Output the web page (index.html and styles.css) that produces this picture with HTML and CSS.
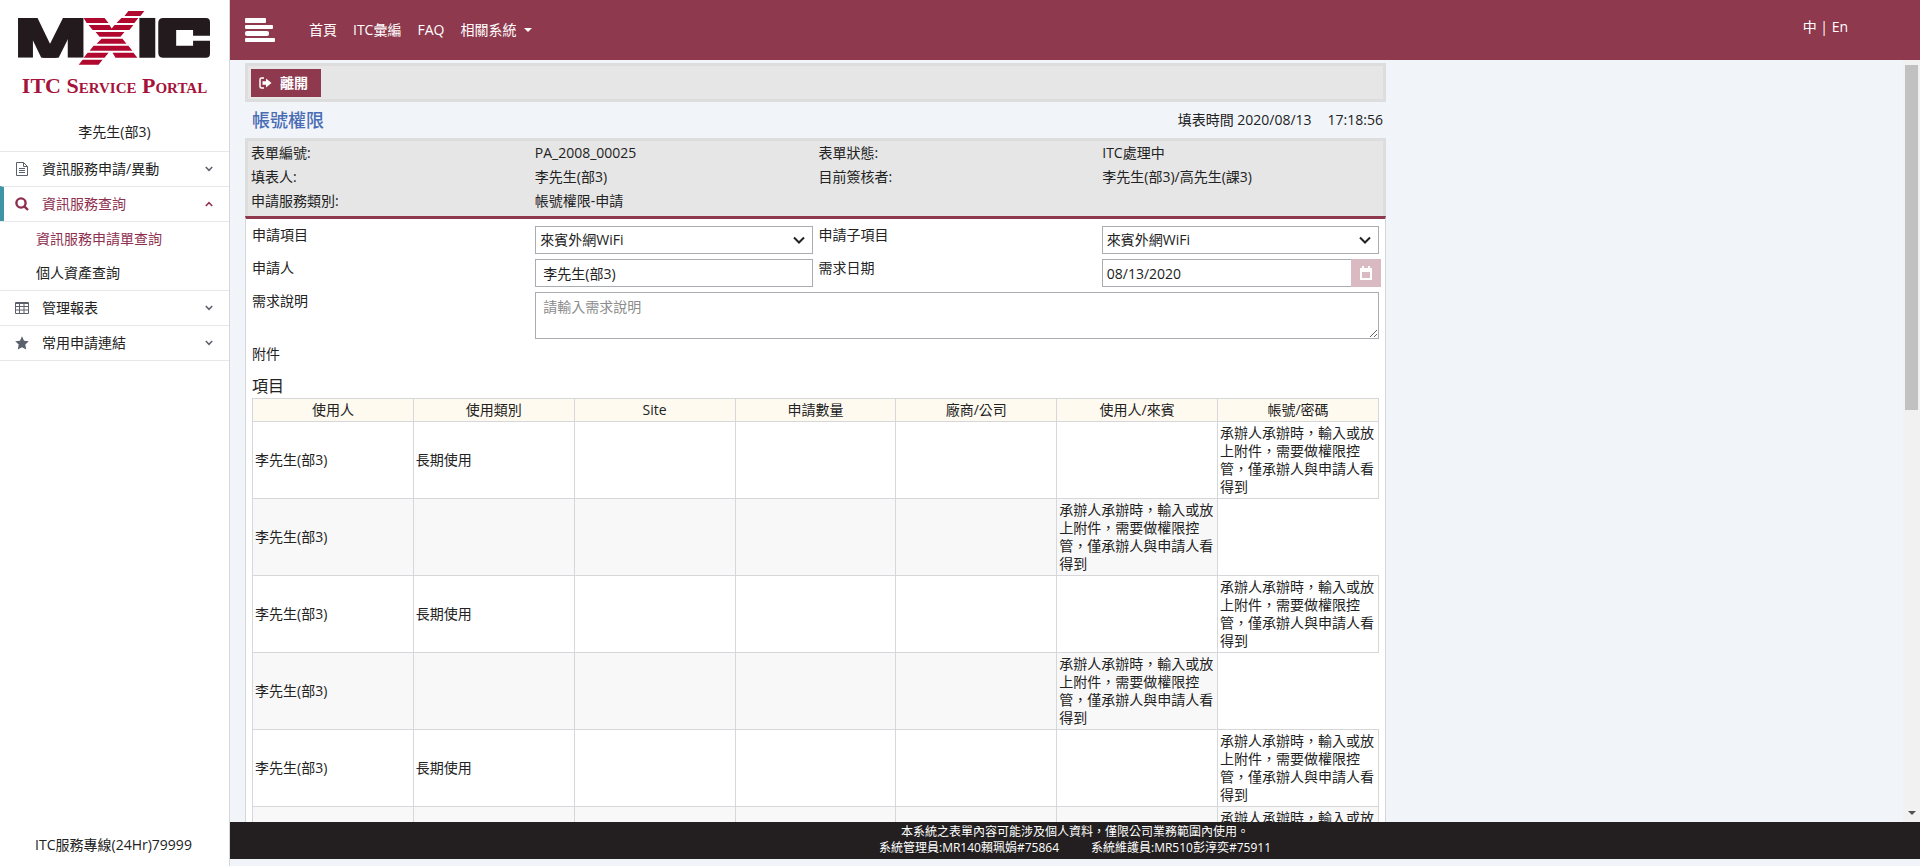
FILE: index.html
```
<!DOCTYPE html>
<html lang="zh-Hant">
<head>
<meta charset="utf-8">
<title>ITC Service Portal</title>
<link rel="stylesheet" href="styles.css">
</head>
<body>
<div class="app">
  <aside class="sidebar">
    <div class="brand">
      <svg class="brand-logo" viewBox="0 0 194 56" role="img" aria-label="MXIC">
        <svg x="0" y="8" width="66" height="40" viewBox="0 0 66 40">
          <rect width="15" height="40" fill="#231a1e"/>
          <rect x="50" width="16" height="40" fill="#231a1e"/>
          <line x1="8" y1="-8" x2="35" y2="48" stroke="#231a1e" stroke-width="14"/>
          <line x1="57" y1="-8" x2="29" y2="48" stroke="#231a1e" stroke-width="14"/>
        </svg>
        <path fill="#b0082f" d="M111 1h16l-4 5h-16zM66 8h21l4 5H69zM104 8h17l-4 5H99zM71 15h21l3 5H75zM97 15h19l-4 5H93zM78 22h29l-4 5H82zM84 29h21l4 5H79zM76 36h35l4 5H72zM70 43h21l-4 5H66zM95 43h21l4 5H98zM65 50h20l-4 5H61z"/>
        <rect x="122" y="8" width="16" height="40" fill="#231a1e"/>
        <path fill="#231a1e" d="M146 8H189q4 0 4 4V26H176V20H159V36H176V31H193V44q0 4-4 4H146q-5 0-5-5V13q0-5 5-5z"/>
      </svg>
      <div class="brand-name">ITC Service Portal</div>
    </div>
    <div class="user">李先生(部3)</div>
    <nav class="menu">
      <button class="menu-item" type="button">
        <svg class="menu-icon" viewBox="0 0 14 14" fill="none" stroke="currentColor"><path d="M1.5.5h7l4 4v9h-11zM8.5.5v4h4M4 6.5h6M4 8.500h6M4 10.500h6"/></svg>
        <span>資訊服務申請/異動</span>
        <svg class="chev" viewBox="0 0 8 6"><path d="M.8 1 4 4.300 7.200 1"/></svg>
      </button>
      <button class="menu-item active" type="button">
        <svg class="menu-icon" viewBox="0 0 14 14" fill="none" stroke="currentColor" stroke-width="2.400"><circle cx="6" cy="6" r="4.600"/><path d="m9.300 9.300 3.700 3.700"/></svg>
        <span>資訊服務查詢</span>
        <svg class="chev" viewBox="0 0 8 6"><path d="M.8 5 4 1.700 7.200 5"/></svg>
      </button>
      <div class="submenu">
        <a class="current" href="#">資訊服務申請單查詢</a>
        <a href="#">個人資產查詢</a>
      </div>
      <button class="menu-item" type="button">
        <svg class="menu-icon" viewBox="0 0 14 14" fill="none" stroke="currentColor"><path d="M.5 1.500h13v11H.5zM1 2.500h12M.5 5.500h13M.5 9h13M4.500 2v10.500M9 2v10.500"/></svg>
        <span>管理報表</span>
        <svg class="chev" viewBox="0 0 8 6"><path d="M.8 1 4 4.300 7.200 1"/></svg>
      </button>
      <button class="menu-item" type="button">
        <svg class="menu-icon" viewBox="0 0 14 14" fill="currentColor"><path d="m7 .3 2 4.400 4.800.6-3.500 3.300.9 4.900L7 11.200l-4.200 2.300.9-4.900L.2 5.300 5 4.700z"/></svg>
        <span>常用申請連結</span>
        <svg class="chev" viewBox="0 0 8 6"><path d="M.8 1 4 4.300 7.200 1"/></svg>
      </button>
    </nav>
    <div class="hotline">ITC服務專線(24Hr)79999</div>
  </aside>

  <div class="page">
    <header class="topbar">
      <button class="burger" type="button" aria-label="選單">
        <svg viewBox="0 0 30 24" fill="#fff"><rect width="21" height="5" rx="1"/><rect y="7" width="28" height="4" rx="1"/><rect y="13" width="24" height="5" rx="2"/><rect y="20" width="30" height="4" rx="1"/></svg>
      </button>
      <nav class="topnav">
        <a href="#">首頁</a>
        <a href="#">ITC彙編</a>
        <a href="#">FAQ</a>
        <a href="#">相關系統<svg class="caret" viewBox="0 0 8 4"><path fill="#fff" d="M0 0h8L4 4z"/></svg></a>
      </nav>
      <div class="lang"><a href="#">中</a> | <a href="#">En</a></div>
    </header>

    <div class="body">
      <main class="content">
        <div class="toolbar">
          <button class="leave" type="button">
            <svg viewBox="0 0 13 12"><path fill="none" stroke="#fff" stroke-width="1.500" d="M5 1H2.500Q1 1 1 2.500v7Q1 11 2.500 11H5"/><path fill="#fff" d="M3.500 4.200H7V1.500L12.500 6 7 10.500V7.800H3.500z"/></svg>
            離開
          </button>
        </div>
        <div class="heading">
          <h1>帳號權限</h1>
          <div class="time"><span>填表時間 2020/08/13</span><span>17:18:56</span></div>
        </div>
        <div class="summary">
          <span>表單編號:</span><span>PA_2008_00025</span><span>表單狀態:</span><span>ITC處理中</span>
          <span>填表人:</span><span>李先生(部3)</span><span>目前簽核者:</span><span>李先生(部3)/高先生(課3)</span>
          <span>申請服務類別:</span><span>帳號權限-申請</span>
        </div>
        <section class="panel">
          <form class="form">
            <label for="item">申請項目</label>
            <div class="select"><select id="item"><option>來賓外網WiFi</option></select><svg viewBox="0 0 12 8"><path d="m1 1.500 5 5 5-5"/></svg></div>
            <label for="subitem">申請子項目</label>
            <div class="select"><select id="subitem"><option>來賓外網WiFi</option></select><svg viewBox="0 0 12 8"><path d="m1 1.500 5 5 5-5"/></svg></div>
            <label for="applicant">申請人</label>
            <input id="applicant" class="field" type="text" value="李先生(部3)">
            <label for="due">需求日期</label>
            <div class="date">
              <input id="due" class="field" type="text" value="08/13/2020">
              <button type="button" aria-label="選擇日期"><svg viewBox="0 0 12 14"><path fill="#fff" fill-rule="evenodd" d="M0 2h2V0h2v2h4V0h2v2h2v12H0zM2 6v6h8V6z"/></svg></button>
            </div>
            <label for="desc">需求說明</label>
            <textarea id="desc" class="field" placeholder="請輸入需求說明"></textarea>
            <span class="attach">附件</span>
          </form>
          <h2>項目</h2>
          <table>
            <thead><tr><th>使用人</th><th>使用類別</th><th>Site</th><th>申請數量</th><th>廠商/公司</th><th>使用人/來賓</th><th>帳號/密碼</th></tr></thead>
            <tbody>
              <tr><td>李先生(部3)</td><td>長期使用</td><td></td><td></td><td></td><td></td><td>承辦人承辦時，輸入或放上附件，需要做權限控管，僅承辦人與申請人看得到</td></tr>
              <tr><td>李先生(部3)</td><td></td><td></td><td></td><td></td><td>承辦人承辦時，輸入或放上附件，需要做權限控管，僅承辦人與申請人看得到</td></tr>
              <tr><td>李先生(部3)</td><td>長期使用</td><td></td><td></td><td></td><td></td><td>承辦人承辦時，輸入或放上附件，需要做權限控管，僅承辦人與申請人看得到</td></tr>
              <tr><td>李先生(部3)</td><td></td><td></td><td></td><td></td><td>承辦人承辦時，輸入或放上附件，需要做權限控管，僅承辦人與申請人看得到</td></tr>
              <tr><td>李先生(部3)</td><td>長期使用</td><td></td><td></td><td></td><td></td><td>承辦人承辦時，輸入或放上附件，需要做權限控管，僅承辦人與申請人看得到</td></tr>
              <tr><td></td><td></td><td></td><td></td><td></td><td></td><td>承辦人承辦時，輸入或放上附件，需要做權限控管，僅承辦人與申請人看得到</td></tr>
            </tbody>
          </table>
        </section>
      </main>
      <div class="scrollbar"><div class="thumb"></div><svg viewBox="0 0 8 4"><path fill="#505050" d="M0 0h8L4 4z"/></svg></div>
    </div>

    <footer class="footer">
      <div>本系統之表單內容可能涉及個人資料，僅限公司業務範圍內使用。</div>
      <div class="contacts"><span>系統管理員:MR140賴珮娟#75864</span><span>系統維護員:MR510彭淳奕#75911</span></div>
    </footer>
  </div>
</div>
</body>
</html>
```
FILE: styles.css
```
* { box-sizing: border-box; }
body {
  margin: 0;
  font: 14px/18px "Open Sans", "Noto Sans CJK TC", sans-serif;
  color: #222;
  background: #f1f5fa;
}
button, input, select, textarea { font: inherit; color: inherit; margin: 0; }
button { border: 0; background: none; padding: 0; }
a { color: inherit; text-decoration: none; }

.app { display: flex; height: 100vh; }

.sidebar {
  width: 230px;
  flex: none;
  display: flex;
  flex-direction: column;
  background: #fff;
  border-right: 1px solid #d5d7da;
}
.brand { padding: 10px 18px 0; }
.brand-logo { display: block; width: 100%; }
.brand-name {
  margin-top: 8px;
  font: bold 22px/24px "Liberation Serif", serif;
  font-variant: small-caps;
  text-align: center;
  white-space: nowrap;
  color: #a5123a;
}
.user { padding: 25px 0 10px; text-align: center; }
.menu-item {
  display: flex;
  align-items: center;
  width: 100%;
  height: 35px;
  padding: 0 16px 0 15px;
  border-top: 1px solid #e6e7e9;
  text-align: left;
}
.menu-item span { flex: 1; }
.menu-item:last-child { height: 36px; border-bottom: 1px solid #e6e7e9; }
.menu-icon { width: 14px; height: 14px; margin-right: 13px; color: #5a606c; }
.chev { width: 8px; height: 6px; fill: none; stroke: #5a606c; stroke-width: 1.5; }
.menu-item.active {
  padding-left: 11px;
  border-left: 4px solid #3f95a5;
  color: #8e2f50;
}
.menu-item.active .menu-icon { color: #8e2f50; }
.menu-item.active .chev { stroke: #8e2f50; }
.submenu { border-top: 1px solid #e6e7e9; }
.submenu a { display: block; padding: 8px 0 8px 36px; }
.submenu .current { color: #8e2f50; }
.hotline { margin-top: auto; padding: 0 2px 12px 0; text-align: center; }

.page { flex: 1; min-width: 0; display: flex; flex-direction: column; }
.topbar {
  flex: none;
  display: flex;
  align-items: center;
  height: 60px;
  padding: 0 72px 0 15px;
  background: #8e394d;
  color: #fff;
}
.burger { width: 30px; height: 24px; }
.burger svg { display: block; }
.topnav { display: flex; gap: 16px; margin-left: 34px; }
.topnav a { display: flex; align-items: center; }
.caret { width: 8px; height: 4px; margin-left: 8px; }
.lang { margin-left: auto; padding-bottom: 6px; }

.body { flex: 1; min-height: 0; display: flex; }
.content { flex: 1; min-width: 0; padding: 3px 15px 0; overflow-y: auto; scrollbar-width: none; }
.content > * { max-width: 1141px; }
.scrollbar {
  width: 17px;
  display: flex;
  flex-direction: column;
  align-items: center;
  padding: 5px 0 7px;
  background: #f1f1f1;
}
.thumb { width: 13px; height: 46%; background: #c1c1c1; }
.scrollbar svg { width: 8px; height: 4px; margin-top: auto; }

.toolbar { padding: 3px 3px 2px; border: 3px solid #ddd; background: #e6e6e6; }
.leave {
  display: flex;
  align-items: center;
  gap: 8px;
  height: 28px;
  padding: 0 13px 0 8px;
  background: #8e394d;
  color: #fff;
  font-weight: bold;
}
.leave svg { width: 13px; height: 12px; }
.heading { display: flex; justify-content: space-between; align-items: center; height: 36px; padding: 0 3px 0 7px; }
h1 { margin: 0; font-size: 18px; line-height: 24px; font-weight: 500; color: #4a6cb5; }
.time { display: flex; gap: 16px; }

.summary, .form { display: grid; grid-template-columns: repeat(4, minmax(0, 1fr)); column-gap: 6px; }
.summary {
  padding: 0 3px 3px;
  border: 3px solid #ddd;
  border-bottom: 0;
  background: #e6e6e6;
  line-height: 24px;
}
.panel {
  padding: 7px 6px 30px;
  border: 1px solid #d5d7da;
  border-top: 3px solid #8e394d;
  background: #fff;
}
.form { row-gap: 5px; align-items: start; }
.field, .select select {
  display: block;
  width: 100%;
  height: 28px;
  padding: 0 7px;
  border: 1px solid #aaacb1;
  border-radius: 0;
  background: #fff;
}
.select { position: relative; }
.select select { appearance: none; padding: 0 4px; }
.select svg {
  position: absolute;
  right: 8px;
  top: 10px;
  width: 12px;
  height: 8px;
  fill: none;
  stroke: #222;
  stroke-width: 2;
  pointer-events: none;
}
.date { display: flex; margin-right: -2px; }
.date .field { padding: 0 4px; border-right: 0; }
.date button { flex: none; display: grid; place-items: center; width: 30px; background: #d9b9c2; }
.date svg { width: 12px; height: 14px; }
textarea.field { grid-column: span 3; height: 47px; padding: 5px 7px; resize: vertical; }
textarea::placeholder { color: #8c8c8c; opacity: 1; }
.attach { padding: 1px 0; }
h2 { margin: 11px 0 0; font-size: 16px; line-height: 23px; font-weight: normal; }

table { width: 100%; table-layout: fixed; border-collapse: collapse; }
th, td { height: 23px; padding: 2px; border: 1px solid #d5d7da; font-weight: normal; text-align: left; }
th { background: #fffaf0; text-align: center; }
tbody tr:nth-child(even) td { background: #f8f8f8; }

.footer {
  flex: none;
  margin-bottom: 7px;
  padding: 2px 0 3px;
  background: #231f20;
  color: #fff;
  font-size: 12px;
  line-height: 16px;
  text-align: center;
}
.contacts { display: flex; justify-content: center; gap: 32px; }
```
